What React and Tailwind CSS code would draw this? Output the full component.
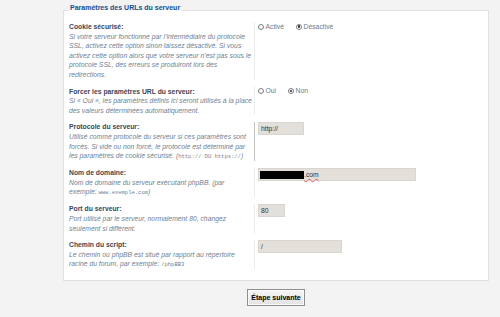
import React from 'react';

const mono = "font-['Liberation_Mono',monospace] not-italic text-[5.5px] leading-[9px]";

const rows = [
  {
    label: 'Cookie sécurisé:',
    desc: "Si votre serveur fonctionne par l’intermédiaire du protocole SSL, activez cette option sinon laissez désactivé. Si vous activez cette option alors que votre serveur n’est pas sous le protocole SSL, des erreurs se produiront lors des redirections.",
    field: { type: 'radio', options: ['Activé', 'Désactivé'], checked: 1 },
  },
  {
    label: 'Forcer les paramètres URL du serveur:',
    desc: 'Si « Oui », les paramètres définis ici seront utilisés à la place des valeurs déterminées automatiquement.',
    field: { type: 'radio', options: ['Oui', 'Non'], checked: 1 },
  },
  {
    label: 'Protocole du serveur:',
    desc: (
      <>
        Utilisé comme protocole du serveur si ces paramètres sont forcés. Si vide ou non forcé, le protocole est déterminé par les paramètres de cookie sécurisé.{' '}
        (<span className={mono}>http:// OU https://</span>)
      </>
    ),
    field: { type: 'text', value: 'http://', width: 'w-[46px]' },
    active: true,
  },
  {
    label: 'Nom de domaine:',
    desc: (
      <>
        Nom de domaine du serveur exécutant phpBB. (par exemple: <span className={mono}>www.exemple.com</span>)
      </>
    ),
    field: { type: 'domain', width: 'w-[158px]' },
  },
  {
    label: 'Port du serveur:',
    desc: 'Port utilisé par le serveur, normalement 80, changez seulement si différent.',
    field: { type: 'text', value: '80', width: 'w-[27px]' },
  },
  {
    label: 'Chemin du script:',
    desc: (
      <>
        Le chemin où phpBB est situé par rapport au répertoire racine du forum, par exemple: <span className={mono}>/phpBB3</span>
      </>
    ),
    field: { type: 'text', value: '/', width: 'w-[84px]' },
  },
];

function Radio({ checked }) {
  return (
    <span className="w-[6px] h-[6px] rounded-full border border-[#7d7d7d] bg-white flex items-center justify-center shrink-0">
      {checked && <span className="w-[2.5px] h-[2.5px] rounded-full bg-[#2c2c2c]" />}
    </span>
  );
}

function Field({ field }) {
  if (field.type === 'radio') {
    return (
      <div className="flex items-center gap-[12px] h-[9px]">
        {field.options.map((opt, i) => (
          <label key={opt} className="flex items-center gap-[1.5px] text-[#6c7b8d]">
            <Radio checked={i === field.checked} />
            {opt}
          </label>
        ))}
      </div>
    );
  }
  if (field.type === 'domain') {
    return (
      <div className={`${field.width} h-[13px] bg-[#e3e0db] border border-[#d9d5cf] flex items-center pl-[1px] text-[#333]`}>
        <span className="w-[44px] h-[8px] bg-black" />
        <span className="underline decoration-wavy decoration-[#e06060] decoration-[0.5px] underline-offset-[1px]">.com</span>
      </div>
    );
  }
  return (
    <div className={`${field.width} h-[13px] bg-[#e3e0db] border border-[#d9d5cf] flex items-center pl-[2px] text-[#333]`}>
      {field.value}
    </div>
  );
}

export default function App() {
  return (
    <div className="w-[500px] h-[317px] bg-[#f3f3f3] pt-[3px] pl-[63px] pr-[11px] font-['Liberation_Sans',Arial,sans-serif] text-[6.8px] leading-[9.6px] overflow-hidden">
      <fieldset className="bg-white border border-[#e0e0e0] px-[5px] pb-[11px]">
        <legend className="px-[1px] pb-[5px] font-bold text-[#15508e] text-[7px] leading-[10px]">Paramètres des URLs du serveur</legend>
        <div className="flex flex-col gap-[7px] pt-[4px]">
          {rows.map((row) => (
            <div key={row.label} className="flex items-stretch">
              <div className="w-[185px] shrink-0 pr-[1px]">
                <div className="font-bold text-[#3a4656]">{row.label}</div>
                <div className="italic text-[#6e7f93]">{row.desc}</div>
              </div>
              <div className={`flex-1 border-l-[1.5px] pl-[3px] ${row.active ? 'border-[#c2c2c2]' : 'border-[#ebebeb]'}`}>
                <Field field={row.field} />
              </div>
            </div>
          ))}
        </div>
      </fieldset>
      <div className="flex justify-center mt-[8px]">
        <button className="h-[17px] px-[3px] border border-[#8f8f8f] bg-gradient-to-b from-[#f6f6f6] to-[#e2e2e2] font-bold text-black text-[7px] shadow-[inset_0_0_0_1px_#fafafa]">
          Étape suivante
        </button>
      </div>
    </div>
  );
}
